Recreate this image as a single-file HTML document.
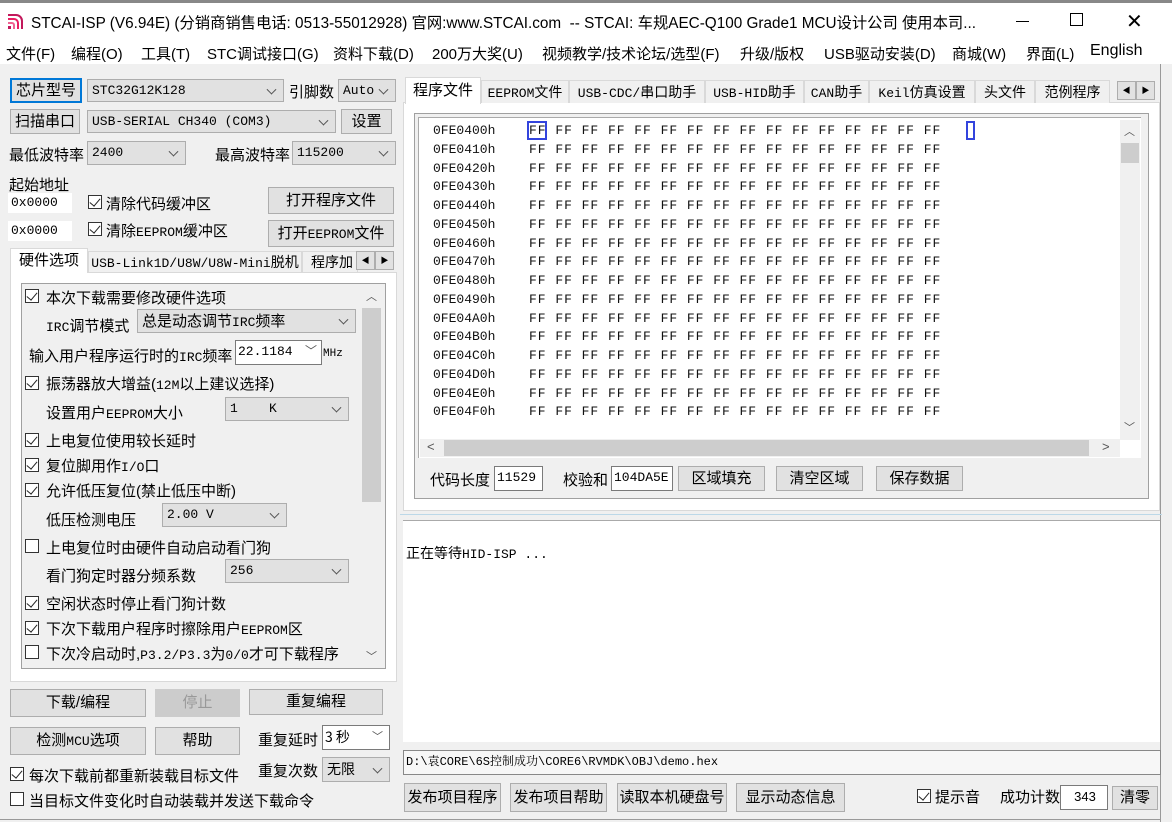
<!DOCTYPE html>
<html><head><meta charset="utf-8"><style>
*{box-sizing:border-box;margin:0;padding:0}
body{width:1172px;height:822px;overflow:hidden;background:#f0f0f0;font-family:"Liberation Sans","Noto Sans CJK SC",sans-serif;font-size:14px;color:#000;position:relative}
.a{position:absolute;white-space:nowrap}
.btn{position:absolute;background:#e1e1e1;border:1px solid #adadad;text-align:center;font-size:15px;white-space:nowrap;overflow:hidden}
.sel{position:absolute;background:#e1e1e1;border:1px solid #adadad;font-family:"Liberation Mono","Noto Serif CJK SC",monospace;font-size:13px;padding-left:4px;white-space:nowrap}
.sel:after{content:"";position:absolute;right:8px;top:50%;width:6px;height:6px;border-right:1px solid #555;border-bottom:1px solid #555;transform:translateY(-70%) rotate(45deg)}
.inp{position:absolute;background:#fff;border:1px solid #7a7a7a;font-family:"Liberation Mono",monospace;font-size:13px;padding-left:2px;white-space:nowrap}
.cb{position:absolute;width:14px;height:14px;border:1px solid #333;background:#fff}
.cb.k:after{content:"";position:absolute;left:3px;top:0px;width:5px;height:9px;border-right:1.5px solid #222;border-bottom:1.5px solid #222;transform:rotate(40deg)}
.m{font-family:"Liberation Mono","Noto Serif CJK SC",monospace;font-size:13px}
.hex{position:absolute;font-family:"Liberation Mono",monospace;font-size:13px;line-height:18.75px;color:#111;white-space:pre}
.tab{position:absolute;border:1px solid #d9d9d9;border-bottom:none;background:#f0f0f0;font-size:14px;text-align:center;white-space:nowrap}
.mn{position:absolute;top:43px;font-size:15px;white-space:nowrap}
</style></head><body>
<!-- title -->
<div class="a" style="left:0;top:0;width:1172px;height:64px;background:#fff"></div>
<div class="a" style="left:0;top:0;width:1172px;height:3px;background:#888"></div>
<svg class="a" style="left:6px;top:11px" width="20" height="20" viewBox="0 0 20 20"><path d="M2 4h8a6 6 0 0 1 6 6v8" stroke="#c2185b" stroke-width="2" fill="none"/><path d="M2 8h6a4 4 0 0 1 4 4v6" stroke="#e91e63" stroke-width="2" fill="none"/><path d="M2 12h4a2 2 0 0 1 2 2v4" stroke="#f06292" stroke-width="2" fill="none"/><rect x="2" y="15" width="3" height="3" fill="#c2185b"/></svg>
<div class="a" style="left:31px;top:11px;font-size:15.3px">STCAI-ISP (V6.94E) (分销商销售电话: 0513-55012928) 官网:www.STCAI.com&nbsp; -- STCAI: 车规AEC-Q100 Grade1 MCU设计公司 使用本司...</div>
<div class="a" style="left:1016px;top:21px;width:13px;height:1px;background:#000"></div>
<div class="a" style="left:1070px;top:13px;width:13px;height:13px;border:1px solid #000"></div>
<div class="a" style="left:1126px;top:9px;font-size:20px;font-weight:100">✕</div>
<div class="mn" style="left:6px">文件(F)</div>
<div class="mn" style="left:71px">编程(O)</div>
<div class="mn" style="left:141px">工具(T)</div>
<div class="mn" style="left:207px">STC调试接口(G)</div>
<div class="mn" style="left:333px">资料下载(D)</div>
<div class="mn" style="left:432px">200万大奖(U)</div>
<div class="mn" style="left:542px">视频教学/技术论坛/选型(F)</div>
<div class="mn" style="left:740px">升级/版权</div>
<div class="mn" style="left:824px">USB驱动安装(D)</div>
<div class="mn" style="left:952px">商城(W)</div>
<div class="mn" style="left:1026px">界面(L)</div>
<div class="mn" style="left:1090px;top:42px;font-size:16px">English</div>
<div class="a" style="left:1160px;top:64px;width:1px;height:758px;background:#999"></div>

<!-- left top -->
<div class="btn" style="left:10px;top:78px;width:72px;height:25px;border:2px solid #0078d7;line-height:21px">芯片型号</div>
<div class="sel" style="left:87px;top:79px;width:197px;height:23px;line-height:21px">STC32G12K128</div>
<div class="a" style="left:289px;top:81px;font-size:15px">引脚数</div>
<div class="sel" style="left:338px;top:79px;width:58px;height:23px;line-height:21px">Auto</div>
<div class="btn" style="left:10px;top:109px;width:70px;height:25px;line-height:23px">扫描串口</div>
<div class="sel" style="left:87px;top:110px;width:249px;height:23px;line-height:21px">USB-SERIAL CH340 (COM3)</div>
<div class="btn" style="left:341px;top:109px;width:51px;height:25px;line-height:23px">设置</div>
<div class="a" style="left:9px;top:144px;font-size:15px">最低波特率</div>
<div class="sel" style="left:87px;top:141px;width:99px;height:24px;line-height:22px">2400</div>
<div class="a" style="left:215px;top:144px;font-size:15px">最高波特率</div>
<div class="sel" style="left:292px;top:141px;width:104px;height:24px;line-height:22px">115200</div>
<div class="a" style="left:9px;top:174px;font-size:15px">起始地址</div>
<div class="inp" style="left:8px;top:193px;width:64px;height:20px;line-height:18px;border-color:#fff">0x0000</div>
<div class="cb k" style="left:88px;top:195px"></div>
<div class="a" style="left:106px;top:193px;font-size:15px">清除代码缓冲区</div>
<div class="btn" style="left:268px;top:187px;width:126px;height:27px;line-height:25px">打开程序文件</div>
<div class="inp" style="left:8px;top:221px;width:64px;height:20px;line-height:18px;border-color:#fff">0x0000</div>
<div class="cb k" style="left:88px;top:222px"></div>
<div class="a" style="left:106px;top:220px;font-size:15px">清除<span class="m">EEPROM</span>缓冲区</div>
<div class="btn" style="left:268px;top:220px;width:126px;height:27px;line-height:25px">打开<span class="m">EEPROM</span>文件</div>

<!-- left tabs -->
<div class="a" style="left:10px;top:272px;width:387px;height:410px;background:#fff;border:1px solid #d9d9d9"></div>
<div class="tab" style="left:10px;top:248px;width:78px;height:25px;background:#fff;line-height:24px;font-size:15px">硬件选项</div>
<div class="tab" style="left:88px;top:251px;width:214px;height:21px;line-height:20px"><span class="m">USB-Link1D/U8W/U8W-Mini</span>脱机</div>
<div class="tab" style="left:302px;top:251px;width:56px;height:21px;line-height:20px;text-align:left;padding-left:8px;overflow:hidden">程序加</div>
<div class="btn" style="left:356px;top:251px;width:19px;height:19px;font-size:8px;line-height:17px">◀</div>
<div class="btn" style="left:375px;top:251px;width:19px;height:19px;font-size:8px;line-height:17px">▶</div>
<div class="a" style="left:21px;top:283px;width:365px;height:386px;border:1px solid #a0a0a0;background:#f0f0f0"></div>
<div class="a" style="left:361px;top:284px;width:21px;height:384px;background:#f0f0f0"></div>
<div class="a" style="left:362px;top:308px;width:19px;height:194px;background:#cdcdcd"></div>
<div class="a" style="left:366px;top:288px;font-size:11px;color:#555">︿</div>
<div class="a" style="left:366px;top:648px;font-size:11px;color:#555">﹀</div>
<div class="cb k" style="left:25px;top:289px"></div><div class="a" style="left:46px;top:287px;font-size:15px">本次下载需要修改硬件选项</div>
<div class="a" style="left:46px;top:315px;font-size:15px"><span class="m">IRC</span>调节模式</div>
<div class="sel" style="left:137px;top:309px;width:219px;height:24px;line-height:22px;font-family:'Noto Sans CJK SC';font-size:15px">总是动态调节<span class="m">IRC</span>频率</div>
<div class="a" style="left:29px;top:345px;font-size:15px">输入用户程序运行时的<span class="m">IRC</span>频率</div>
<div class="inp" style="left:235px;top:340px;width:87px;height:25px;line-height:22px">22.1184</div>
<div class="a" style="left:305px;top:342px;font-size:12px;color:#555">﹀</div>
<div class="a m" style="left:323px;top:348px;font-size:11px">MHz</div>
<div class="cb k" style="left:25px;top:376px"></div><div class="a" style="left:46px;top:373px;font-size:15px">振荡器放大增益(<span class="m">12M</span>以上建议选择)</div>
<div class="a" style="left:46px;top:402px;font-size:15px">设置用户<span class="m">EEPROM</span>大小</div>
<div class="sel" style="left:225px;top:397px;width:124px;height:24px;line-height:22px">1&nbsp;&nbsp;&nbsp; K</div>
<div class="cb k" style="left:25px;top:433px"></div><div class="a" style="left:46px;top:430px;font-size:15px">上电复位使用较长延时</div>
<div class="cb k" style="left:25px;top:458px"></div><div class="a" style="left:46px;top:455px;font-size:15px">复位脚用作<span class="m">I/O</span>口</div>
<div class="cb k" style="left:25px;top:483px"></div><div class="a" style="left:46px;top:480px;font-size:15px">允许低压复位(禁止低压中断)</div>
<div class="a" style="left:46px;top:509px;font-size:15px">低压检测电压</div>
<div class="sel" style="left:162px;top:503px;width:125px;height:24px;line-height:22px">2.00 V</div>
<div class="cb" style="left:25px;top:539px"></div><div class="a" style="left:46px;top:537px;font-size:15px">上电复位时由硬件自动启动看门狗</div>
<div class="a" style="left:46px;top:565px;font-size:15px">看门狗定时器分频系数</div>
<div class="sel" style="left:225px;top:559px;width:124px;height:24px;line-height:22px">256</div>
<div class="cb k" style="left:25px;top:596px"></div><div class="a" style="left:46px;top:593px;font-size:15px">空闲状态时停止看门狗计数</div>
<div class="cb k" style="left:25px;top:621px"></div><div class="a" style="left:46px;top:618px;font-size:15px">下次下载用户程序时擦除用户<span class="m">EEPROM</span>区</div>
<div class="cb" style="left:25px;top:645px"></div><div class="a" style="left:46px;top:643px;font-size:15px">下次冷启动时,<span class="m">P3.2/P3.3</span>为<span class="m">0/0</span>才可下载程序</div>

<!-- left bottom -->
<div class="btn" style="left:10px;top:689px;width:136px;height:28px;line-height:26px">下载/编程</div>
<div class="btn" style="left:155px;top:689px;width:85px;height:28px;line-height:26px;background:#ccc;border-color:#ccc;color:#999">停止</div>
<div class="btn" style="left:249px;top:689px;width:134px;height:26px;line-height:24px">重复编程</div>
<div class="btn" style="left:10px;top:727px;width:136px;height:28px;line-height:26px">检测<span class="m">MCU</span>选项</div>
<div class="btn" style="left:155px;top:727px;width:85px;height:28px;line-height:26px">帮助</div>
<div class="a" style="left:258px;top:729px;font-size:15px">重复延时</div>
<div class="inp" style="left:322px;top:725px;width:68px;height:25px;line-height:22px;font-family:'Noto Sans CJK SC';font-size:14px">3 秒</div>
<div class="a" style="left:372px;top:728px;font-size:11px;color:#555">﹀</div>
<div class="cb k" style="left:10px;top:767px"></div><div class="a" style="left:29px;top:765px;font-size:15px">每次下载前都重新装载目标文件</div>
<div class="a" style="left:258px;top:760px;font-size:15px">重复次数</div>
<div class="sel" style="left:322px;top:757px;width:68px;height:25px;line-height:23px;font-family:'Noto Sans CJK SC';font-size:14px">无限</div>
<div class="cb" style="left:10px;top:792px"></div><div class="a" style="left:29px;top:790px;font-size:15px">当目标文件变化时自动装载并发送下载命令</div>
<div class="a" style="left:0;top:819px;width:1160px;height:1px;background:#999"></div>

<!-- right tabs -->
<div class="a" style="left:403px;top:102px;width:757px;height:409px;background:#fff;border:1px solid #d9d9d9"></div>
<div class="tab" style="left:405px;top:77px;width:76px;height:27px;background:#fff;line-height:26px;font-size:15px">程序文件</div>
<div class="tab" style="left:481px;top:80px;width:88px;height:23px;line-height:22px"><span class="m">EEPROM</span>文件</div>
<div class="tab" style="left:569px;top:80px;width:136px;height:23px;line-height:22px"><span class="m">USB-CDC/</span>串口助手</div>
<div class="tab" style="left:705px;top:80px;width:99px;height:23px;line-height:22px"><span class="m">USB-HID</span>助手</div>
<div class="tab" style="left:804px;top:80px;width:65px;height:23px;line-height:22px"><span class="m">CAN</span>助手</div>
<div class="tab" style="left:869px;top:80px;width:106px;height:23px;line-height:22px"><span class="m">Keil</span>仿真设置</div>
<div class="tab" style="left:975px;top:80px;width:60px;height:23px;line-height:22px">头文件</div>
<div class="tab" style="left:1035px;top:80px;width:75px;height:23px;line-height:22px">范例程序</div>
<div class="btn" style="left:1117px;top:81px;width:19px;height:19px;font-size:8px;line-height:17px">◀</div>
<div class="btn" style="left:1136px;top:81px;width:19px;height:19px;font-size:8px;line-height:17px">▶</div>
<div class="a" style="left:414px;top:113px;width:735px;height:386px;border:1px solid #a0a0a0;background:#f0f0f0"></div>
<div class="a" style="left:418px;top:117px;width:723px;height:341px;background:#fff;border-left:1px solid #aaa;border-top:1px solid #aaa"></div>
<div class="a" style="left:1120px;top:120px;width:20px;height:320px;background:#f0f0f0"></div>
<div class="a" style="left:1121px;top:143px;width:18px;height:20px;background:#cdcdcd"></div>
<div class="a" style="left:1124px;top:123px;font-size:11px;color:#555">︿</div>
<div class="a" style="left:1124px;top:419px;font-size:11px;color:#555">﹀</div>
<div class="a" style="left:420px;top:439px;width:700px;height:18px;background:#f0f0f0"></div>
<div class="a" style="left:444px;top:440px;width:645px;height:16px;background:#cdcdcd"></div>
<div class="a" style="left:427px;top:439px;font-size:13px;color:#555">&lt;</div>
<div class="a" style="left:1102px;top:439px;font-size:13px;color:#555">&gt;</div>
<div class="hex" style="left:433px;top:122px">0FE0400h
0FE0410h
0FE0420h
0FE0430h
0FE0440h
0FE0450h
0FE0460h
0FE0470h
0FE0480h
0FE0490h
0FE04A0h
0FE04B0h
0FE04C0h
0FE04D0h
0FE04E0h
0FE04F0h</div>
<div class="hex" style="left:529px;top:122px;letter-spacing:0.97px">FF FF FF FF FF FF FF FF FF FF FF FF FF FF FF FF
FF FF FF FF FF FF FF FF FF FF FF FF FF FF FF FF
FF FF FF FF FF FF FF FF FF FF FF FF FF FF FF FF
FF FF FF FF FF FF FF FF FF FF FF FF FF FF FF FF
FF FF FF FF FF FF FF FF FF FF FF FF FF FF FF FF
FF FF FF FF FF FF FF FF FF FF FF FF FF FF FF FF
FF FF FF FF FF FF FF FF FF FF FF FF FF FF FF FF
FF FF FF FF FF FF FF FF FF FF FF FF FF FF FF FF
FF FF FF FF FF FF FF FF FF FF FF FF FF FF FF FF
FF FF FF FF FF FF FF FF FF FF FF FF FF FF FF FF
FF FF FF FF FF FF FF FF FF FF FF FF FF FF FF FF
FF FF FF FF FF FF FF FF FF FF FF FF FF FF FF FF
FF FF FF FF FF FF FF FF FF FF FF FF FF FF FF FF
FF FF FF FF FF FF FF FF FF FF FF FF FF FF FF FF
FF FF FF FF FF FF FF FF FF FF FF FF FF FF FF FF
FF FF FF FF FF FF FF FF FF FF FF FF FF FF FF FF</div>
<div class="a" style="left:527px;top:121px;width:20px;height:19px;border:2px solid #3344dd"></div>
<div class="a" style="left:966px;top:121px;width:9px;height:19px;border:2px solid #3344dd"></div>
<div class="a" style="left:430px;top:469px;font-size:15px">代码长度</div>
<div class="inp" style="left:494px;top:466px;width:49px;height:25px;line-height:22px">11529</div>
<div class="a" style="left:563px;top:469px;font-size:15px">校验和</div>
<div class="inp" style="left:611px;top:466px;width:62px;height:25px;line-height:22px">104DA5E</div>
<div class="btn" style="left:678px;top:466px;width:87px;height:25px;line-height:23px">区域填充</div>
<div class="btn" style="left:776px;top:466px;width:87px;height:25px;line-height:23px">清空区域</div>
<div class="btn" style="left:876px;top:466px;width:87px;height:25px;line-height:23px">保存数据</div>

<!-- log -->
<div class="a" style="left:400px;top:514px;width:762px;height:1px;background:#bcd8e8"></div>
<div class="a" style="left:403px;top:520px;width:757px;height:222px;background:#fff;border-top:1px solid #aaa"></div>
<div class="a" style="left:406px;top:543px;font-size:14px">正在等待<span class="m">HID-ISP ...</span></div>
<div class="inp" style="left:403px;top:750px;width:758px;height:25px;line-height:22px;border-color:#888;background:#f7f7f7;font-family:'Liberation Mono','Noto Serif CJK SC',monospace;font-size:12px">D:\袁CORE\6S控制成功\CORE6\RVMDK\OBJ\demo.hex</div>
<div class="btn" style="left:404px;top:783px;width:97px;height:29px;line-height:27px">发布项目程序</div>
<div class="btn" style="left:510px;top:783px;width:97px;height:29px;line-height:27px">发布项目帮助</div>
<div class="btn" style="left:617px;top:783px;width:110px;height:29px;line-height:27px">读取本机硬盘号</div>
<div class="btn" style="left:736px;top:783px;width:109px;height:29px;line-height:27px">显示动态信息</div>
<div class="cb k" style="left:917px;top:789px"></div><div class="a" style="left:935px;top:786px;font-size:15px">提示音</div>
<div class="a" style="left:1000px;top:786px;font-size:15px">成功计数</div>
<div class="inp" style="left:1060px;top:785px;width:48px;height:25px;line-height:22px;text-align:center;font-family:'Liberation Sans';font-size:13px">343</div>
<div class="btn" style="left:1112px;top:786px;width:46px;height:24px;line-height:22px">清零</div>
</body></html>
